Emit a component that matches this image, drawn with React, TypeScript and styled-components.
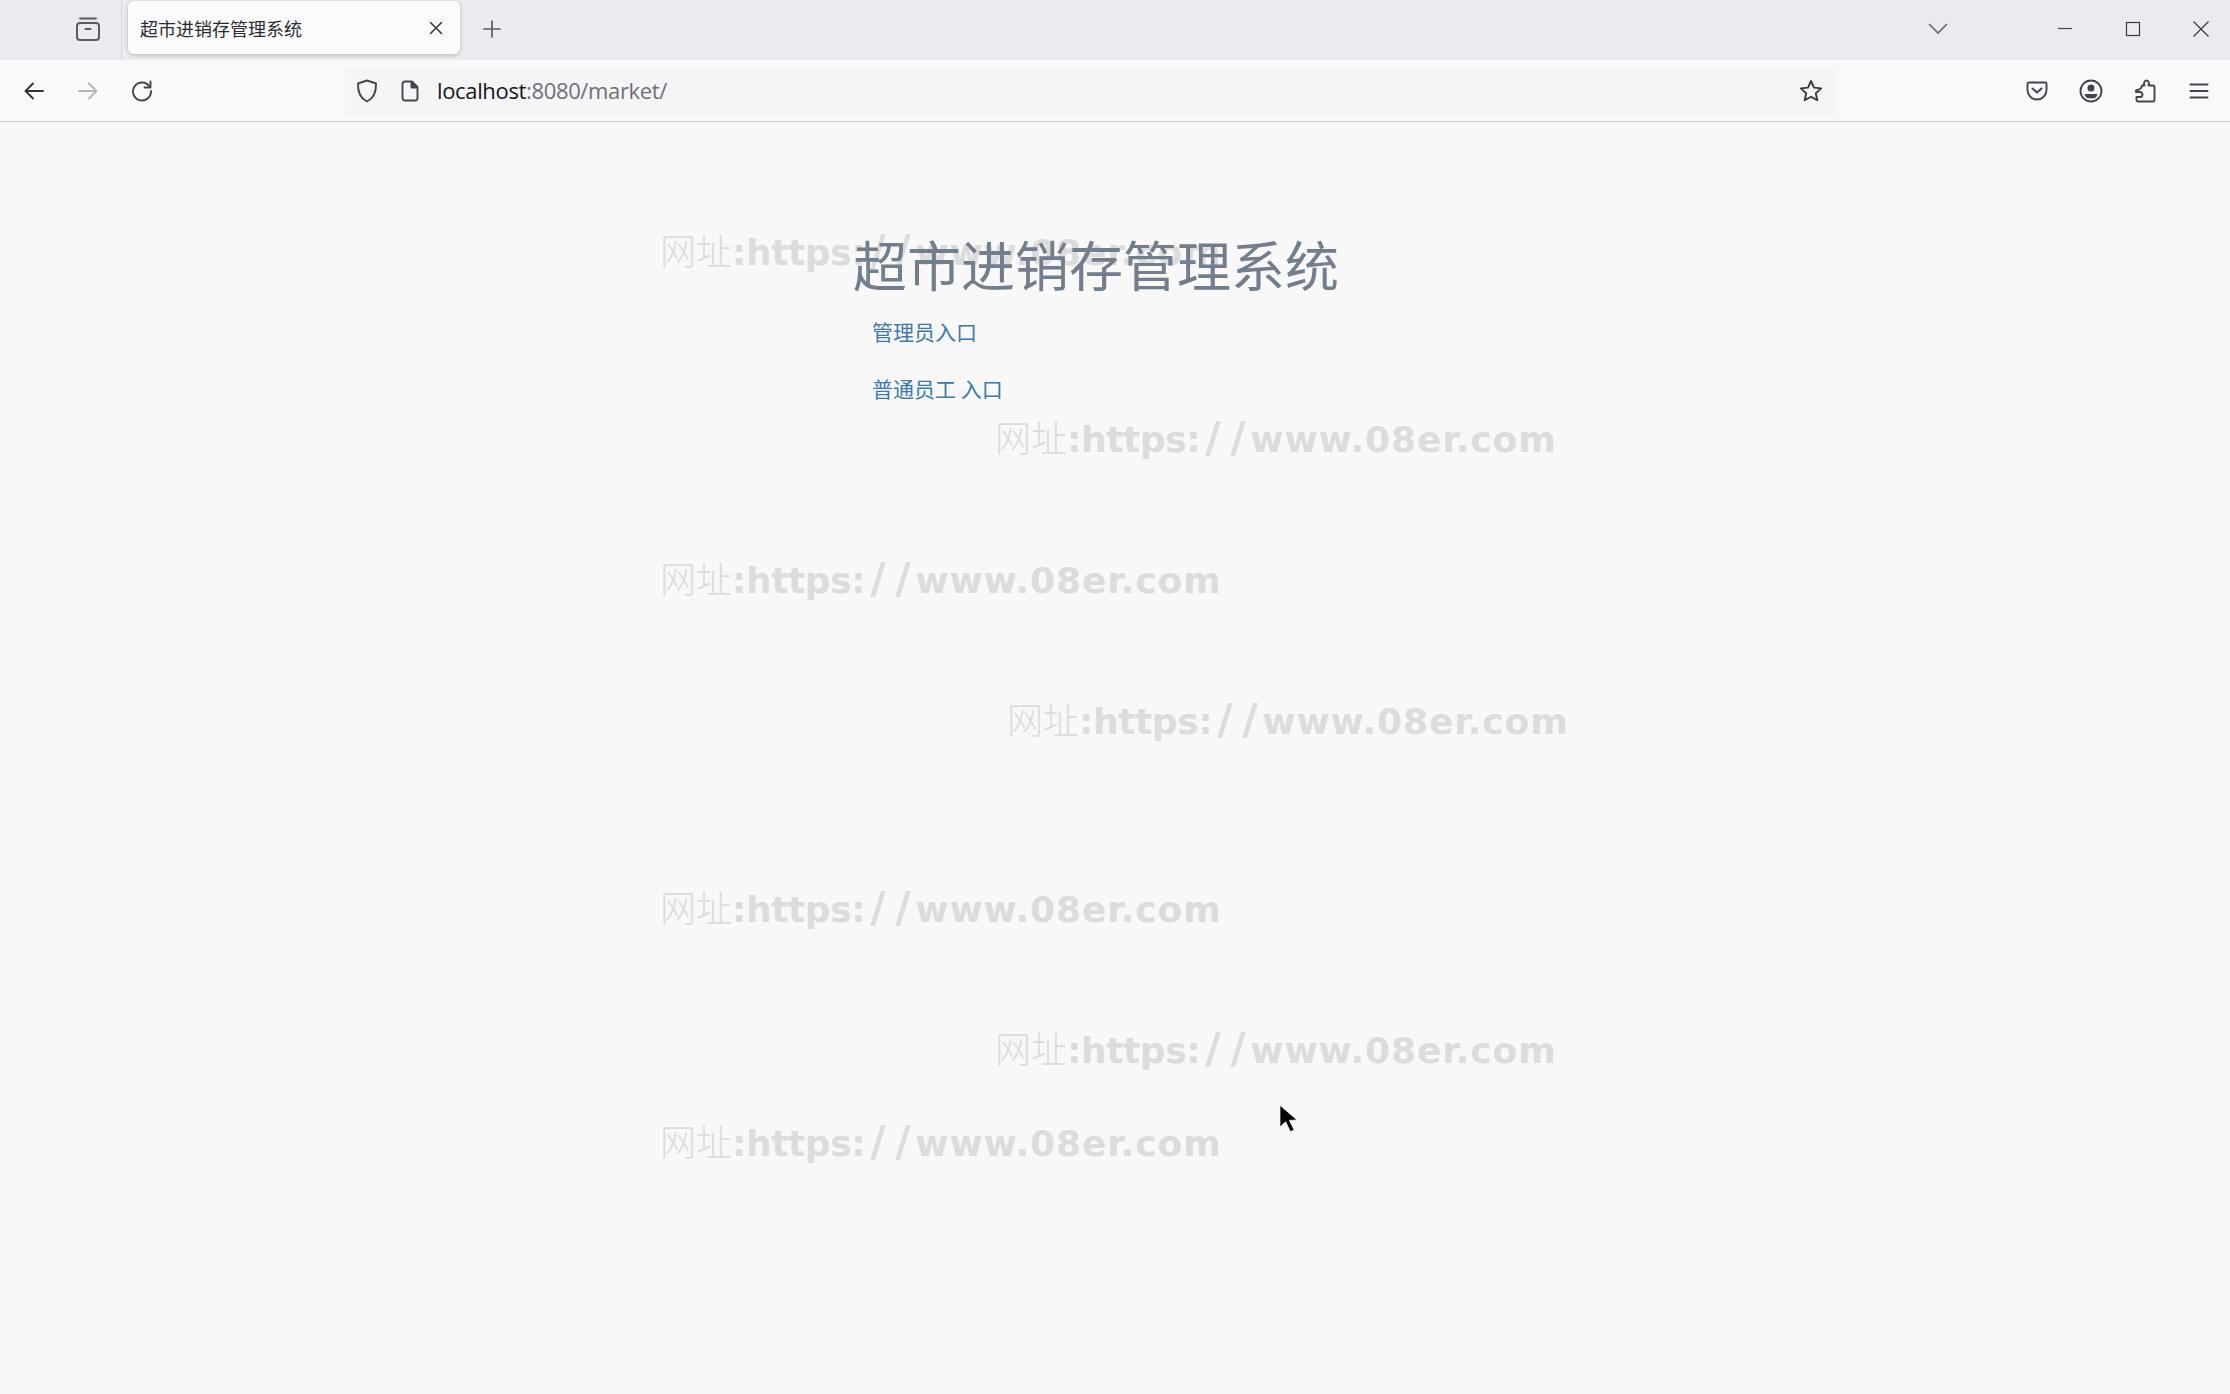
import styled, { createGlobalStyle } from "styled-components";

const CJK = `"Noto Sans CJK SC", "Noto Sans", sans-serif`;

const GlobalStyle = createGlobalStyle`
  html, body {
    margin: 0;
    padding: 0;
    background: #f8f8f9;
  }
`;

const watermarks = [
  { x: 660, y: 226 },
  { x: 995, y: 413 },
  { x: 660, y: 554 },
  { x: 1007, y: 695 },
  { x: 660, y: 883 },
  { x: 995, y: 1024 },
  { x: 660, y: 1117 },
];

export default function App() {
  return (
    <Window>
      <GlobalStyle />
      <TabStrip>
        <IconSlot $ml={66}>
          <svg width="26" height="26" viewBox="0 0 26 26" fill="none" stroke="#5b5b66" strokeWidth="2">
            <path d="M5 2.500h16" strokeLinecap="round" />
            <rect x="2" y="7" width="22" height="17" rx="3" />
            <path d="M10.500 13h5" strokeLinecap="round" />
          </svg>
        </IconSlot>
        <TabDivider />
        <Tab>
          <TabTitle>超市进销存管理系统</TabTitle>
          <svg width="14" height="14" viewBox="0 0 14 14" stroke="#3a3a45" strokeWidth="1.6" strokeLinecap="round">
            <path d="M1.500 1.500l11 11M12.500 1.500l-11 11" />
          </svg>
        </Tab>
        <IconSlot $ml={10}>
          <svg width="20" height="20" viewBox="0 0 20 20" stroke="#5b5b66" strokeWidth="1.7" strokeLinecap="round">
            <path d="M10 2v16M2 10h16" />
          </svg>
        </IconSlot>
        <IconSlot $ml={1402}>
          <svg width="20" height="12" viewBox="0 0 20 12" fill="none" stroke="#6b6b75" strokeWidth="1.7" strokeLinecap="round">
            <path d="M1.500 1.500L10 10l8.500-8.500" />
          </svg>
        </IconSlot>
        <WindowControls>
          <IconSlot>
            <svg width="16" height="16" viewBox="0 0 16 16" stroke="#44444c" strokeWidth="1.2">
              <path d="M1 7.500h14" />
            </svg>
          </IconSlot>
          <IconSlot>
            <svg width="16" height="16" viewBox="0 0 16 16" fill="none" stroke="#3a3a42" strokeWidth="1.2">
              <rect x="1.500" y="1.500" width="13" height="13" />
            </svg>
          </IconSlot>
          <IconSlot>
            <svg width="18" height="18" viewBox="0 0 18 18" stroke="#3a3a42" strokeWidth="1.3">
              <path d="M1.500 1.500l15 15M16.500 1.500l-15 15" />
            </svg>
          </IconSlot>
        </WindowControls>
      </TabStrip>

      <Toolbar>
        <NavGroup>
          <IconSlot>
            <svg width="22" height="22" viewBox="0 0 22 22" fill="none" stroke="#33333b" strokeWidth="1.9" strokeLinecap="round" strokeLinejoin="round">
              <path d="M20 11H3M10 3.500L2.500 11l7.500 7.500" />
            </svg>
          </IconSlot>
          <IconSlot>
            <svg width="22" height="22" viewBox="0 0 22 22" fill="none" stroke="#b5b5ba" strokeWidth="1.9" strokeLinecap="round" strokeLinejoin="round">
              <path d="M2 11h17M12 3.500l7.500 7.500-7.500 7.500" />
            </svg>
          </IconSlot>
          <IconSlot>
            <svg width="22" height="22" viewBox="0 0 22 22" fill="none" stroke="#44444c" strokeWidth="1.9" strokeLinecap="round" strokeLinejoin="round">
              <path d="M18.500 6.500A9 9 0 1 0 20 11" />
              <path d="M19.500 1.500v6h-6" />
            </svg>
          </IconSlot>
        </NavGroup>
        <UrlBar>
          <UrlIcon>
            <svg width="22" height="24" viewBox="0 0 22 24" fill="none" stroke="#44444c" strokeWidth="1.9" strokeLinejoin="round">
              <path d="M11 1.500l9 3c.3 8-1.500 14.500-9 18-7.500-3.500-9.300-10-9-18z" />
            </svg>
          </UrlIcon>
          <UrlIcon>
            <svg width="18" height="22" viewBox="0 0 18 22" fill="none" stroke="#44444c" strokeWidth="1.900" strokeLinejoin="round">
              <path d="M4 1.500h7l5.500 5.500v11a2.500 2.500 0 0 1-2.500 2.500H4A2.500 2.500 0 0 1 1.500 18V4A2.500 2.500 0 0 1 4 1.500z" />
              <path d="M10.500 1.500v6h6" fill="#44444c" />
            </svg>
          </UrlIcon>
          <UrlText>
            localhost<UrlRest>:8080/market/</UrlRest>
          </UrlText>
          <UrlIcon>
            <svg width="24" height="24" viewBox="0 0 24 24" fill="none" stroke="#3a3a42" strokeWidth="1.9" strokeLinejoin="round">
              <path d="M12 2l3 6.600 7.200.8-5.400 4.800 1.500 7.100L12 17.700l-6.300 3.600 1.500-7.100L1.800 9.400 9 8.600z" />
            </svg>
          </UrlIcon>
        </UrlBar>
        <ToolbarActions>
          <IconSlot>
            <svg width="22" height="20" viewBox="0 0 22 20" fill="none" stroke="#44444c" strokeWidth="1.900" strokeLinecap="round" strokeLinejoin="round">
              <path d="M3 1.500h16A1.500 1.500 0 0 1 20.500 3v6a9.500 9.500 0 0 1-19 0V3A1.500 1.500 0 0 1 3 1.500z" />
              <path d="M6.500 7.500L11 11.500l4.500-4" />
            </svg>
          </IconSlot>
          <IconSlot>
            <svg width="24" height="24" viewBox="0 0 24 24" fill="none" stroke="#44444c" strokeWidth="1.900">
              <circle cx="12" cy="12" r="10.500" />
              <circle cx="12" cy="9" r="3.500" fill="#44444c" stroke="none" />
              <path d="M5.500 15h13c-.5 2-1.500 3.500-3 4.200h-7c-1.500-.7-2.500-2.200-3-4.200z" fill="#44444c" stroke="none" />
            </svg>
          </IconSlot>
          <IconSlot>
            <svg width="22" height="24" viewBox="0 0 22 24" fill="none" stroke="#44444c" strokeWidth="1.900" strokeLinejoin="round">
              <path d="M8 6.500h2.500c-1.500-3 .5-5 2-5s3.500 2 2 5H19a1.500 1.500 0 0 1 1.500 1.500v13a1.500 1.500 0 0 1-1.500 1.500H4a1.500 1.500 0 0 1-1.500-1.500V18H6c2 0 2.500-1.500 2.500-2.500S7.500 13 6 13H2V11.500C4 11 8 10 8 6.500z" />
            </svg>
          </IconSlot>
          <IconSlot>
            <svg width="20" height="18" viewBox="0 0 20 18" stroke="#44444c" strokeWidth="2" strokeLinecap="round">
              <path d="M1.500 2.500h17M1.500 9h17M1.500 15.500h17" />
            </svg>
          </IconSlot>
        </ToolbarActions>
      </Toolbar>

      <Page>
        {watermarks.map((mark) => (
          <Watermark key={`${mark.x}-${mark.y}`} $x={mark.x} $y={mark.y}>
            <WatermarkLabel>网址</WatermarkLabel>:https:<Slash>/</Slash>
            <Slash>/</Slash>
            <WatermarkDomain>www.08er.com</WatermarkDomain>
          </Watermark>
        ))}
        <Content>
          <Title>超市进销存管理系统</Title>
          <EntryLink href="#admin">管理员入口</EntryLink>
          <EntryLink href="#staff">普通员工 入口</EntryLink>
        </Content>
        <Cursor width="19" height="29" viewBox="0 0 20 30">
          <path d="M1 1v23l6-5.500 5 10.500 4-2-5-10 8-.5z" fill="#000" stroke="#fff" strokeWidth="0.8" />
        </Cursor>
      </Page>
    </Window>
  );
}

const Window = styled.div`
  width: 2230px;
  height: 1394px;
  display: flex;
  flex-direction: column;
  overflow: hidden;
  background: #f8f8f9;
`;

const TabStrip = styled.div`
  height: 60px;
  flex: none;
  padding-bottom: 2px;
  box-sizing: border-box;
  display: flex;
  align-items: center;
  background: #ebebef;
`;

const IconSlot = styled.div<{ $ml?: number }>`
  width: 44px;
  height: 44px;
  flex: none;
  margin-left: ${(p) => p.$ml ?? 0}px;
  display: flex;
  align-items: center;
  justify-content: center;
`;

const TabDivider = styled.div`
  width: 1px;
  height: 60px;
  margin: 0 0 -2px 11px;
  background: #d6d6da;
`;

const Tab = styled.div`
  width: 332px;
  height: 53px;
  margin: -3px 0 0 6px;
  padding: 0 17px 0 12px;
  box-sizing: border-box;
  display: flex;
  align-items: center;
  justify-content: space-between;
  background: #fbfbfd;
  border-radius: 6px;
  box-shadow: 0 1px 4px rgba(0, 0, 0, 0.22);
`;

const TabTitle = styled.span`
  font: 18px/24px ${CJK};
  color: #2b2b33;
`;

const WindowControls = styled.div`
  margin-left: 83px;
  display: flex;
  gap: 24px;
`;

const Toolbar = styled.div`
  height: 62px;
  flex: none;
  display: flex;
  align-items: center;
  padding: 0 9px 0 12px;
  box-sizing: border-box;
  background: #f9f9fb;
  border-bottom: 1px solid #cfcfd8;
`;

const NavGroup = styled.div`
  display: flex;
  gap: 10px;
`;

const UrlBar = styled.div`
  width: 1490px;
  height: 50px;
  margin-left: 181px;
  padding: 0 8px 0 6px;
  box-sizing: border-box;
  display: flex;
  align-items: center;
  gap: 11px;
  background: #f5f5f7;
  border-radius: 4px;
`;

const UrlIcon = styled.div`
  width: 32px;
  height: 32px;
  flex: none;
  display: flex;
  align-items: center;
  justify-content: center;
`;

const UrlText = styled.div`
  flex: 1;
  margin-top: -2px;
  font: 22px/30px "Open Sans", "Noto Sans", sans-serif;
  color: #15141a;
  letter-spacing: -0.35px;
`;

const UrlRest = styled.span`
  color: #6f6f78;
`;

const ToolbarActions = styled.div`
  margin-left: auto;
  display: flex;
  gap: 10px;
`;

const Page = styled.div`
  position: relative;
  flex: 1;
  background: #f8f8f9;
`;

const Watermark = styled.div<{ $x: number; $y: number }>`
  position: absolute;
  left: ${(p) => p.$x}px;
  top: ${(p) => p.$y - 125}px;
  font: bold 36px/52px "DejaVu Sans", ${CJK};
  letter-spacing: -0.4px;
  color: #dcdcdc;
  white-space: nowrap;
`;

const WatermarkLabel = styled.span`
  font-family: ${CJK};
  font-weight: 300;
  letter-spacing: 0;
`;

const WatermarkDomain = styled.span`
  letter-spacing: 0.9px;
`;

const Slash = styled.span`
  display: inline-block;
  width: 25px;
  text-align: center;
  font-size: 42px;
  line-height: 40px;
`;

const Content = styled.div`
  position: relative;
  padding-left: 853px;
  display: flex;
  flex-direction: column;
  align-items: flex-start;
`;

const Title = styled.h1`
  margin: 106px 0 16px;
  font: 400 54px/72px ${CJK};
  color: #707e8e;
`;

const EntryLink = styled.a`
  margin: 0 0 27px 19px;
  font: 21px/30px ${CJK};
  color: #3a7ab0;
  text-decoration: none;
`;

const Cursor = styled.svg`
  position: absolute;
  left: 1279px;
  top: 982px;
`;
